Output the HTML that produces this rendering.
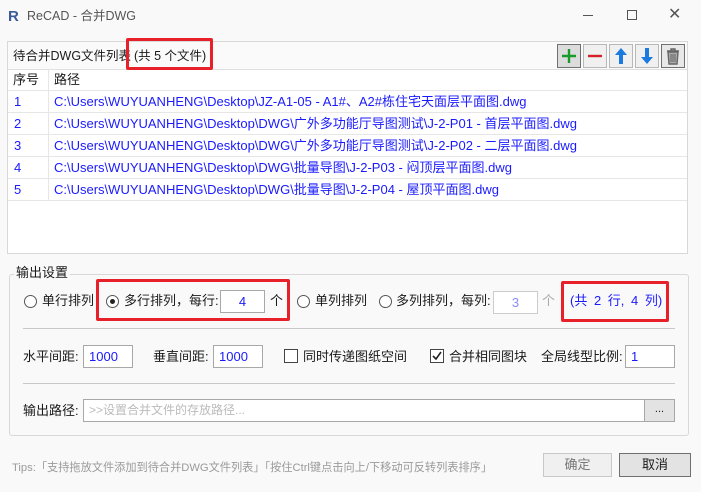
<!DOCTYPE html>
<html><head><meta charset="utf-8"><style>
*{margin:0;padding:0;box-sizing:border-box}
body{width:701px;height:492px;overflow:hidden;background:#f9f9f9;font-family:"Liberation Sans","Noto Sans CJK SC",sans-serif;font-size:13px;color:#1a1a1a;position:relative}
.a{position:absolute;white-space:nowrap}
.t{line-height:16px}
.blue{color:#1a1aff}
.inp{position:absolute;background:#fff;border:1px solid #a8a8a8;height:23px;line-height:21px;padding-left:5px;color:#1a1aff}
.red{position:absolute;border:3px solid #e8202a;border-radius:2px}
.radio{position:absolute;width:13px;height:13px;border:1px solid #555;border-radius:50%;background:#fff}
.chk{position:absolute;width:14px;height:14px;border:1px solid #444;background:#fff}
.btn{position:absolute;width:24px;height:24px;border:1px solid #b8b8b8;background:#f0f0f0}
.row{position:absolute;left:8px;width:679px;height:22px;border-bottom:1px solid #e6e6e6}
.row span{position:absolute;top:3px;line-height:16px;color:#1a1aff}
</style></head><body>
<!-- title -->
<div class="a" style="left:8px;top:8px;font-weight:bold;color:#3a5a9a;font-size:15px">R</div>
<div class="a t" style="left:27px;top:8px;color:#555;font-size:12.5px">ReCAD - 合并DWG</div>
<div class="a" style="left:583px;top:15px;width:10px;height:1px;background:#555"></div>
<div class="a" style="left:627px;top:10px;width:10px;height:10px;border:1px solid #555"></div>
<div class="a" style="left:668px;top:4px;font-size:16px;color:#555">✕</div>
<!-- list panel -->
<div class="a" style="left:7px;top:41px;width:681px;height:213px;border:1px solid #d8d8d8;background:#fff"></div>
<div class="a" style="left:8px;top:42px;width:679px;height:28px;background:#fafafa;border-bottom:1px solid #e0e0e0"></div>
<div class="a t" style="left:13px;top:48px;font-size:12.5px">待合并DWG文件列表</div>
<div class="a t" style="left:134px;top:48px;font-size:12.5px">(共 5 个文件)</div>
<div class="red" style="left:126px;top:38px;width:87px;height:32px"></div>
<div class="btn" style="left:557px;top:44px;background:#dcdcdc;border-color:#707070"><svg width="22" height="22"><path d="M11 4v14M4 11h14" stroke="#1a9a2a" stroke-width="2.4"/></svg></div>
<div class="btn" style="left:583px;top:44px"><svg width="22" height="22"><path d="M4 11h14" stroke="#d8202a" stroke-width="2.4"/></svg></div>
<div class="btn" style="left:609px;top:44px"><svg width="22" height="22"><path d="M11 3l-6 7h4v9h4v-9h4z" fill="#1a7ae0"/></svg></div>
<div class="btn" style="left:635px;top:44px"><svg width="22" height="22"><path d="M11 19l-6-7h4V3h4v9h4z" fill="#1a7ae0"/></svg></div>
<div class="btn" style="left:661px;top:44px;border-color:#707070;background:#e8e8e8"><svg width="22" height="22"><path d="M5 6h12M9 6V4h4v2M6 7l1 12h8l1-12z" stroke="#666" stroke-width="1.4" fill="#aaa"/><path d="M9 9v8M11 9v8M13 9v8" stroke="#666"/></svg></div>
<div class="row" style="top:70px;height:21px"><span style="left:5px;color:#1a1a1a;top:2px">序号</span><span style="left:46px;color:#1a1a1a;top:2px">路径</span></div>
<div class="a" style="left:48px;top:70px;width:1px;height:131px;background:#e6e6e6"></div>
<div class="row" style="top:91px"><span style="left:6px">1</span><span style="left:46px">C:\Users\WUYUANHENG\Desktop\JZ-A1-05 - A1#、A2#栋住宅天面层平面图.dwg</span></div>
<div class="row" style="top:113px"><span style="left:6px">2</span><span style="left:46px">C:\Users\WUYUANHENG\Desktop\DWG\广外多功能厅导图测试\J-2-P01 - 首层平面图.dwg</span></div>
<div class="row" style="top:135px"><span style="left:6px">3</span><span style="left:46px">C:\Users\WUYUANHENG\Desktop\DWG\广外多功能厅导图测试\J-2-P02 - 二层平面图.dwg</span></div>
<div class="row" style="top:157px"><span style="left:6px">4</span><span style="left:46px">C:\Users\WUYUANHENG\Desktop\DWG\批量导图\J-2-P03 - 闷顶层平面图.dwg</span></div>
<div class="row" style="top:179px"><span style="left:6px">5</span><span style="left:46px">C:\Users\WUYUANHENG\Desktop\DWG\批量导图\J-2-P04 - 屋顶平面图.dwg</span></div>
<!-- output group -->
<div class="a" style="left:9px;top:274px;width:680px;height:162px;border:1px solid #d8d8d8;border-radius:3px"></div>
<div class="a t" style="left:14px;top:265px;background:#f9f9f9;padding:0 2px">输出设置</div>
<div class="radio" style="left:24px;top:295px"></div>
<div class="a t" style="left:42px;top:293px">单行排列</div>
<div class="red" style="left:96px;top:279px;width:194px;height:42px"></div>
<div class="radio" style="left:106px;top:295px"></div><div class="a" style="left:110px;top:299px;width:5px;height:5px;border-radius:50%;background:#222"></div>
<div class="a t" style="left:124px;top:293px">多行排列，每行:</div>
<div class="inp" style="left:220px;top:290px;width:45px;text-align:center;padding:0">4</div>
<div class="a t" style="left:270px;top:293px">个</div>
<div class="radio" style="left:297px;top:295px"></div>
<div class="a t" style="left:315px;top:293px">单列排列</div>
<div class="radio" style="left:379px;top:295px"></div>
<div class="a t" style="left:396px;top:293px">多列排列，每列:</div>
<div class="inp" style="left:493px;top:291px;width:45px;text-align:center;padding:0;border-color:#ccc;color:#8a8aff">3</div>
<div class="a t" style="left:542px;top:293px;color:#aaa">个</div>
<div class="red" style="left:561px;top:281px;width:108px;height:41px"></div>
<div class="a t blue" style="left:570px;top:293px;word-spacing:3px">(共 2 行, 4 列)</div>
<div class="a" style="left:23px;top:328px;width:652px;height:1px;background:#c8c8c8"></div>
<div class="a t" style="left:23px;top:349px">水平间距:</div>
<div class="inp" style="left:83px;top:345px;width:50px">1000</div>
<div class="a t" style="left:153px;top:349px">垂直间距:</div>
<div class="inp" style="left:213px;top:345px;width:50px">1000</div>
<div class="chk" style="left:284px;top:349px"></div>
<div class="a t" style="left:303px;top:349px">同时传递图纸空间</div>
<div class="chk" style="left:430px;top:349px"><svg width="12" height="12" style="position:absolute;left:0;top:0"><path d="M2 6l3 3 5-7" stroke="#222" stroke-width="1.6" fill="none"/></svg></div>
<div class="a t" style="left:449px;top:349px">合并相同图块</div>
<div class="a t" style="left:541px;top:349px">全局线型比例:</div>
<div class="inp" style="left:625px;top:345px;width:50px">1</div>
<div class="a" style="left:23px;top:383px;width:652px;height:1px;background:#c8c8c8"></div>
<div class="a t" style="left:23px;top:403px">输出路径:</div>
<div class="inp" style="left:83px;top:399px;width:562px;color:#bbb;font-size:12px">&gt;&gt;设置合并文件的存放路径...</div>
<div class="a" style="left:644px;top:399px;width:31px;height:23px;border:1px solid #a8a8a8;background:#e3e3e3;text-align:center;line-height:18px;font-size:11px">...</div>
<!-- footer -->
<div class="a" style="left:12px;top:459px;color:#9a9a9a;font-size:11.2px">Tips:「支持拖放文件添加到待合并DWG文件列表」「按住Ctrl键点击向上/下移动可反转列表排序」</div>
<div class="a" style="left:543px;top:453px;width:69px;height:24px;border:1px solid #c8c8c8;background:#f0f0f0;text-align:center;line-height:22px;color:#777">确定</div>
<div class="a" style="left:619px;top:453px;width:72px;height:24px;border:1px solid #707070;background:#e3e3e3;text-align:center;line-height:22px">取消</div>
</body></html>
